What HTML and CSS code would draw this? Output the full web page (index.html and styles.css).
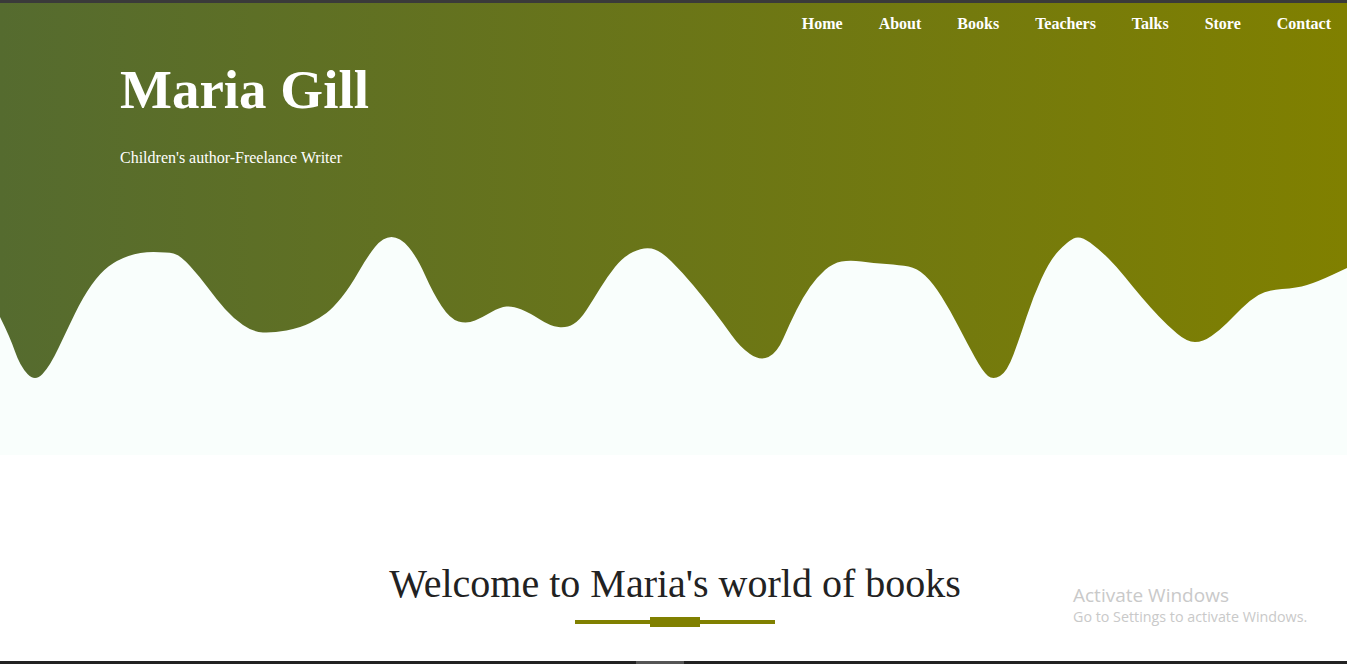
FILE: index.html
```html
<!DOCTYPE html>
<html lang="en">
<head>
<meta charset="utf-8">
<title>Maria Gill</title>
<link rel="stylesheet" href="styles.css">
</head>
<body>
<div class="topbar"></div>
<header class="hero">
  <nav class="nav">
    <a href="#">Home</a>
    <a href="#">About</a>
    <a href="#">Books</a>
    <a href="#">Teachers</a>
    <a href="#">Talks</a>
    <a href="#">Store</a>
    <a href="#">Contact</a>
  </nav>
  <div class="intro">
    <h1 class="title">Maria Gill</h1>
    <p class="subtitle">Children's author-Freelance Writer</p>
  </div>
  <svg class="wave" viewBox="0 0 1347 220" preserveAspectRatio="none" aria-hidden="true">
    <path fill="#f9fefc" d="M0,82 Q10,102 15,116.5 Q20,131 27.5,139 Q35,147 42.5,139 Q50,131 58.5,113 Q67,95 75,78.5 Q83,62 91.5,50 Q100,38 108.5,31.5 Q117,25 128.5,21 Q140,17 153.5,17 Q167,17 173.5,18.5 Q180,20 190,31 Q200,42 208.5,53.5 Q217,65 225,74 Q233,83 243,90 Q253,97 263,97.5 Q273,98 286.5,95.5 Q300,93 310,88 Q320,83 326.5,78 Q333,73 341.5,62.5 Q350,52 358.5,37 Q367,22 375,12 Q383,2 391.5,2 Q400,2 408.5,12 Q417,22 425,40 Q433,58 441.5,71 Q450,84 458.5,86.5 Q467,89 475,85.5 Q483,82 491.5,77 Q500,72 506.5,71.5 Q513,71 521.5,74.5 Q530,78 540,84.5 Q550,91 558.5,92 Q567,93 573.5,89 Q580,85 586.5,75 Q593,65 600,53.5 Q607,42 615,32 Q623,22 633,17 Q643,12 651.5,13.5 Q660,15 671.5,26.5 Q683,38 693,50 Q703,62 713,75 Q723,88 731.5,100 Q740,112 750,119 Q760,126 768.5,122 Q777,118 783.5,103 Q790,88 796.5,75 Q803,62 810,52 Q817,42 825,35 Q833,28 841.5,26.5 Q850,25 861.5,26.5 Q873,28 886.5,29 Q900,30 908.5,31.5 Q917,33 925,40.5 Q933,48 941.5,61.5 Q950,75 958.5,91.5 Q967,108 975,122.5 Q983,137 988,141 Q993,145 1000,141 Q1007,137 1013.5,119.5 Q1020,102 1026.5,82 Q1033,62 1041.5,43.5 Q1050,25 1058.5,16 Q1067,7 1073.5,3.5 Q1080,0 1090,7.5 Q1100,15 1108.5,23.5 Q1117,32 1125,42 Q1133,52 1141.5,62 Q1150,72 1158.5,81 Q1167,90 1177,98.5 Q1187,107 1195,107 Q1203,107 1211.5,101 Q1220,95 1226.5,88.5 Q1233,82 1241.5,73.5 Q1250,65 1258.5,60 Q1267,55 1282,54 Q1297,53 1307,50 Q1317,47 1332,40 L1347,33 L1347,220 L0,220 Z"/>
  </svg>
</header>
<main class="welcome">
  <h2 class="welcome-title">Welcome to Maria's world of books</h2>
  <div class="divider">
    <span class="divider-line"></span>
    <span class="divider-block"></span>
    <span class="divider-line"></span>
  </div>
  <div class="activate">
    <div class="activate-title">Activate Windows</div>
    <div class="activate-sub">Go to Settings to activate Windows.</div>
  </div>
</main>
<div class="bottombar"><span class="thumb"></span></div>
</body>
</html>
```

FILE: styles.css
```css
* { box-sizing: border-box; }

html, body {
  margin: 0;
  padding: 0;
  height: 664px;
  overflow: hidden;
  background: #ffffff;
  font-family: "Liberation Serif", "Times New Roman", serif;
}

.topbar {
  height: 3px;
  background: #3a3a3a;
}

.hero {
  height: 452px;
  display: flex;
  flex-direction: column;
  background: linear-gradient(to right, #556b2f, #808000);
}

.nav {
  display: flex;
  justify-content: flex-end;
  gap: 36px;
  padding: 11px 16px 0 0;
}

.nav a {
  color: #ffffff;
  text-decoration: none;
  font-weight: bold;
  font-size: 16px;
  line-height: 20px;
}

.intro {
  padding-left: 120px;
}

.title {
  margin: 24px 0 0;
  color: #ffffff;
  font-size: 55px;
  line-height: 63px;
  font-weight: bold;
}

.subtitle {
  margin: 27px 0 0;
  color: #ffffff;
  font-size: 16px;
  line-height: 20px;
}

.wave {
  display: block;
  margin-top: auto;
  width: 100%;
  height: 220px;
}

.welcome {
  position: relative;
  height: 206px;
  padding-top: 106px;
  padding-left: 3px;
  display: flex;
  flex-direction: column;
  align-items: center;
}

.welcome-title {
  margin: 0;
  font-weight: normal;
  font-size: 40px;
  line-height: 46px;
  color: #222222;
}

.divider {
  margin-top: 10px;
  display: flex;
  align-items: center;
  height: 10px;
}

.divider-line {
  display: block;
  width: 75px;
  height: 4px;
  background: #808000;
}

.divider-block {
  display: block;
  width: 50px;
  height: 10px;
  background: #808000;
}

.activate {
  position: absolute;
  left: 1073px;
  top: 128px;
  font-family: "Open Sans", "Noto Sans", sans-serif;
  color: #c9c9c9;
}

.activate-title {
  font-size: 19px;
  line-height: 24px;
}

.activate-sub {
  font-size: 14.3px;
  line-height: 20px;
}

.bottombar {
  height: 3px;
  background: #222222;
  display: flex;
  padding-left: 636px;
}

.thumb {
  display: block;
  width: 48px;
  height: 3px;
  background: #555555;
}
```
